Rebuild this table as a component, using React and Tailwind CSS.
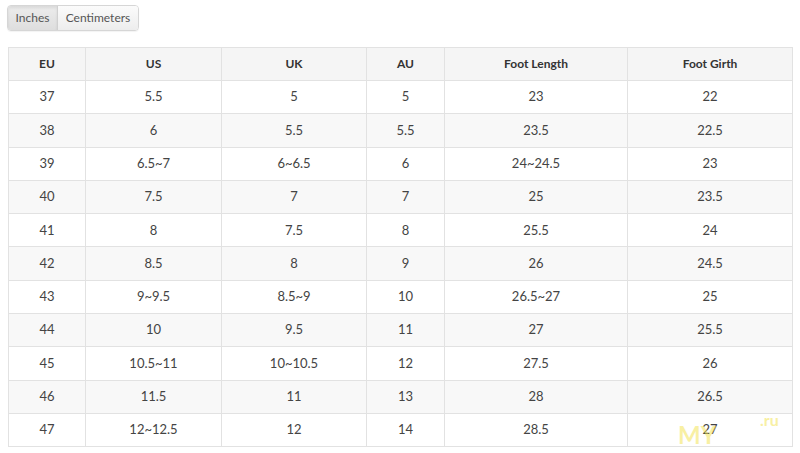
import React from "react";

const rows = [
  ["37", "5.5", "5", "5", "23", "22"],
  ["38", "6", "5.5", "5.5", "23.5", "22.5"],
  ["39", "6.5~7", "6~6.5", "6", "24~24.5", "23"],
  ["40", "7.5", "7", "7", "25", "23.5"],
  ["41", "8", "7.5", "8", "25.5", "24"],
  ["42", "8.5", "8", "9", "26", "24.5"],
  ["43", "9~9.5", "8.5~9", "10", "26.5~27", "25"],
  ["44", "10", "9.5", "11", "27", "25.5"],
  ["45", "10.5~11", "10~10.5", "12", "27.5", "26"],
  ["46", "11.5", "11", "13", "28", "26.5"],
  ["47", "12~12.5", "12", "14", "28.5", "27"],
];

const heads = ["EU", "US", "UK", "AU", "Foot Length", "Foot Girth"];

export default function App() {
  return (
    <div
      className="relative w-[800px] h-[453px] bg-white text-[#444]"
      style={{ fontFamily: "Lato, 'Open Sans', sans-serif" }}
    >
      <div className="pl-[7px] pt-[4px]">
        <div className="inline-flex h-[26px] rounded-[4px] border border-[#d6d6d6] overflow-hidden text-[12px] text-[#555] shadow-[0_1px_1px_rgba(0,0,0,0.05)]">
          <div className="w-[50px] flex items-center justify-center bg-gradient-to-b from-[#ececec] to-[#dedede] border-r border-[#d0d0d0] shadow-[inset_0_2px_3px_rgba(0,0,0,0.08)]">
            Inches
          </div>
          <div className="w-[80px] flex items-center justify-center bg-gradient-to-b from-[#fbfbfb] to-[#ededed]">
            Centimeters
          </div>
        </div>
      </div>
      <div className="pl-[8px] pt-[16px]">
        <table className="table-fixed border-collapse w-[784px] text-center">
          <colgroup>
            <col className="w-[77px]" />
            <col className="w-[136px]" />
            <col className="w-[145px]" />
            <col className="w-[78px]" />
            <col className="w-[183px]" />
            <col className="w-[165px]" />
          </colgroup>
          <thead>
            <tr className="h-[33px] bg-[#f5f5f5]">
              {heads.map((h) => (
                <th
                  key={h}
                  className="border border-[#e2e2e2] font-bold text-[12px] text-[#333] p-0"
                >
                  {h}
                </th>
              ))}
            </tr>
          </thead>
          <tbody>
            {rows.map((r, i) => (
              <tr
                key={i}
                className={
                  (i % 2 === 1 ? "bg-[#f8f8f8] " : "bg-white ") + "h-[33.3px]"
                }
              >
                {r.map((c, j) => (
                  <td
                    key={j}
                    className="border border-[#e2e2e2] text-[13px] text-[#444] p-0"
                  >
                    {c}
                  </td>
                ))}
              </tr>
            ))}
          </tbody>
        </table>
      </div>
      <div className="absolute left-[678px] top-[423px] text-[24px] font-bold text-[#f3e24a] opacity-50 leading-none pointer-events-none">
        MY
      </div>
      <div className="absolute left-[760px] top-[412px] text-[16px] font-bold text-[#f3e24a] opacity-50 leading-none pointer-events-none">
        .ru
      </div>
    </div>
  );
}
